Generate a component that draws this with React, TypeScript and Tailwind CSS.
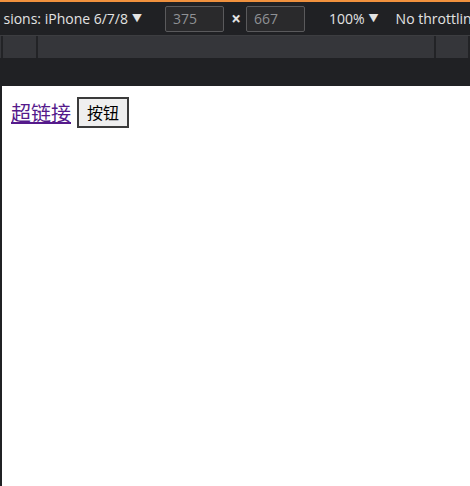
export default function App() {
  return (
    <div className="flex h-[486px] w-[470px] flex-col overflow-hidden bg-[#202124] font-['Open_Sans','Noto_Sans_CJK_SC',sans-serif]">
      <div className="h-[2px] bg-[#f0913e]" />
      <div className="flex h-[33px] items-center overflow-hidden whitespace-nowrap text-[14px] text-[#e3e3e3] [&>*]:shrink-0">
        <div className="flex w-[128px] justify-end">
          <span>sions: iPhone 6/7/8</span>
        </div>
        <span className="ml-[4px] text-[10px]">▼</span>
        <div className="ml-[23px] flex h-[26px] w-[59px] items-center rounded-[2px] border border-[#5a5a5c] bg-[#2a2a2c] pl-[7px] text-[#8f9194]">
          375
        </div>
        <span className="ml-[7px] mr-[5px] w-[10px] text-center text-[17px] font-bold leading-none text-[#e3e3e3]">×</span>
        <div className="flex h-[26px] w-[59px] items-center rounded-[2px] border border-[#5a5a5c] bg-[#2a2a2c] pl-[7px] text-[#8f9194]">
          667
        </div>
        <span className="ml-[24px]">100%</span>
        <span className="ml-[4px] text-[10px]">▼</span>
        <span className="ml-[17px]">No throttling</span>
      </div>
      <div className="h-px bg-[#3c3d40]" />
      <div className="flex h-[22px] bg-[#35363a]">
        <div className="ml-px w-[2px] bg-[#222326]" />
        <div className="ml-[33px] w-[2px] bg-[#222326]" />
        <div className="ml-[396px] w-[2px] bg-[#222326]" />
        <div className="ml-[32px] w-[2px] bg-[#222326]" />
      </div>
      <div className="h-[28px] bg-[#202124]" />
      <div className="ml-[2px] flex-1 bg-white">
        <div className="flex items-center gap-[6px] pl-[9px] pt-[11px]">
          <a href="#" className="text-[20px] leading-[26px] text-[#551a8b] underline font-['Noto_Sans_CJK_SC',sans-serif]">
            超链接
          </a>
          <button className="h-[31px] border-2 border-[#3b3b3b] bg-[#efefef] px-[8px] text-[16px] leading-[21px] text-black font-['Noto_Sans_CJK_SC',sans-serif]">
            按钮
          </button>
        </div>
      </div>
    </div>
  );
}
